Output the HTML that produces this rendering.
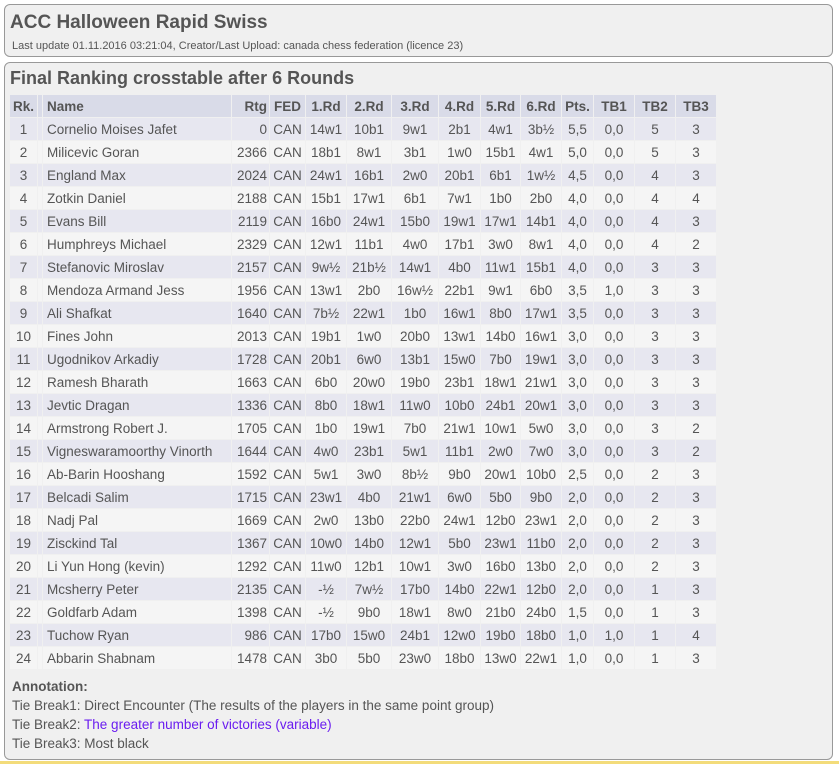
<!DOCTYPE html>
<html><head><meta charset="utf-8"><style>
body{margin:0;background:#fff;font-family:"Liberation Sans",sans-serif;color:#555;width:839px;height:764px;position:relative;overflow:hidden}
.b1{position:absolute;left:4px;top:4px;width:827px;height:51px;border:1px solid #999;border-radius:6px;background:#f0f0f0}
.b2{position:absolute;left:4px;top:62px;width:827px;height:696px;border:1px solid #999;border-radius:6px;background:#f0f0f0}
h1{position:absolute;left:5px;top:7px;margin:0;font-size:19px;font-weight:bold;color:#555}
.sub{position:absolute;left:7px;top:35px;font-size:11px}
h2{position:absolute;left:5px;top:5px;margin:0;font-size:18px;font-weight:bold;color:#555}
table{position:absolute;left:4px;top:31px;border-collapse:collapse;table-layout:fixed;font-size:13.5px}
td,th{height:22px;padding:0 2px;border:1px solid #f0f0f0;white-space:nowrap;overflow:hidden;text-align:center}
th{background:#d9dbe8;font-weight:bold}
tr.o td{background:#e7e7f0}tr.e td{background:#f5f5f5}
td.n,th.n{text-align:left;padding-left:4px}td.r,th.r{text-align:right}
.ann{position:absolute;left:7px;top:614px;font-size:13.5px;line-height:19px}
.ann b{color:#555}
.yl{position:absolute;left:0;top:761px;width:839px;height:3px;background:#f3dc7a}
</style></head><body>
<div class="b1"><h1>ACC Halloween Rapid Swiss</h1><div class="sub">Last update 01.11.2016 03:21:04, Creator/Last Upload: canada chess federation (licence 23)</div></div>
<div class="b2"><h2>Final Ranking crosstable after 6 Rounds</h2>
<table>
<colgroup><col style="width:28px"><col style="width:5px"><col style="width:189px"><col style="width:38px"><col style="width:36px"><col style="width:41px"><col style="width:45px"><col style="width:47px"><col style="width:42px"><col style="width:40px"><col style="width:41px"><col style="width:32px"><col style="width:41px"><col style="width:41px"><col style="width:41px"></colgroup>
<tr><th>Rk.</th><th></th><th class="n">Name</th><th class="r">Rtg</th><th>FED</th><th>1.Rd</th><th>2.Rd</th><th>3.Rd</th><th>4.Rd</th><th>5.Rd</th><th>6.Rd</th><th>Pts.</th><th>TB1</th><th>TB2</th><th>TB3</th></tr>
<tr class="o"><td>1</td><td></td><td class="n">Cornelio Moises Jafet</td><td class="r">0</td><td>CAN</td><td>14w1</td><td>10b1</td><td>9w1</td><td>2b1</td><td>4w1</td><td>3b½</td><td>5,5</td><td>0,0</td><td>5</td><td>3</td></tr>
<tr class="e"><td>2</td><td></td><td class="n">Milicevic Goran</td><td class="r">2366</td><td>CAN</td><td>18b1</td><td>8w1</td><td>3b1</td><td>1w0</td><td>15b1</td><td>4w1</td><td>5,0</td><td>0,0</td><td>5</td><td>3</td></tr>
<tr class="o"><td>3</td><td></td><td class="n">England Max</td><td class="r">2024</td><td>CAN</td><td>24w1</td><td>16b1</td><td>2w0</td><td>20b1</td><td>6b1</td><td>1w½</td><td>4,5</td><td>0,0</td><td>4</td><td>3</td></tr>
<tr class="e"><td>4</td><td></td><td class="n">Zotkin Daniel</td><td class="r">2188</td><td>CAN</td><td>15b1</td><td>17w1</td><td>6b1</td><td>7w1</td><td>1b0</td><td>2b0</td><td>4,0</td><td>0,0</td><td>4</td><td>4</td></tr>
<tr class="o"><td>5</td><td></td><td class="n">Evans Bill</td><td class="r">2119</td><td>CAN</td><td>16b0</td><td>24w1</td><td>15b0</td><td>19w1</td><td>17w1</td><td>14b1</td><td>4,0</td><td>0,0</td><td>4</td><td>3</td></tr>
<tr class="e"><td>6</td><td></td><td class="n">Humphreys Michael</td><td class="r">2329</td><td>CAN</td><td>12w1</td><td>11b1</td><td>4w0</td><td>17b1</td><td>3w0</td><td>8w1</td><td>4,0</td><td>0,0</td><td>4</td><td>2</td></tr>
<tr class="o"><td>7</td><td></td><td class="n">Stefanovic Miroslav</td><td class="r">2157</td><td>CAN</td><td>9w½</td><td>21b½</td><td>14w1</td><td>4b0</td><td>11w1</td><td>15b1</td><td>4,0</td><td>0,0</td><td>3</td><td>3</td></tr>
<tr class="e"><td>8</td><td></td><td class="n">Mendoza Armand Jess</td><td class="r">1956</td><td>CAN</td><td>13w1</td><td>2b0</td><td>16w½</td><td>22b1</td><td>9w1</td><td>6b0</td><td>3,5</td><td>1,0</td><td>3</td><td>3</td></tr>
<tr class="o"><td>9</td><td></td><td class="n">Ali Shafkat</td><td class="r">1640</td><td>CAN</td><td>7b½</td><td>22w1</td><td>1b0</td><td>16w1</td><td>8b0</td><td>17w1</td><td>3,5</td><td>0,0</td><td>3</td><td>3</td></tr>
<tr class="e"><td>10</td><td></td><td class="n">Fines John</td><td class="r">2013</td><td>CAN</td><td>19b1</td><td>1w0</td><td>20b0</td><td>13w1</td><td>14b0</td><td>16w1</td><td>3,0</td><td>0,0</td><td>3</td><td>3</td></tr>
<tr class="o"><td>11</td><td></td><td class="n">Ugodnikov Arkadiy</td><td class="r">1728</td><td>CAN</td><td>20b1</td><td>6w0</td><td>13b1</td><td>15w0</td><td>7b0</td><td>19w1</td><td>3,0</td><td>0,0</td><td>3</td><td>3</td></tr>
<tr class="e"><td>12</td><td></td><td class="n">Ramesh Bharath</td><td class="r">1663</td><td>CAN</td><td>6b0</td><td>20w0</td><td>19b0</td><td>23b1</td><td>18w1</td><td>21w1</td><td>3,0</td><td>0,0</td><td>3</td><td>3</td></tr>
<tr class="o"><td>13</td><td></td><td class="n">Jevtic Dragan</td><td class="r">1336</td><td>CAN</td><td>8b0</td><td>18w1</td><td>11w0</td><td>10b0</td><td>24b1</td><td>20w1</td><td>3,0</td><td>0,0</td><td>3</td><td>3</td></tr>
<tr class="e"><td>14</td><td></td><td class="n">Armstrong Robert J.</td><td class="r">1705</td><td>CAN</td><td>1b0</td><td>19w1</td><td>7b0</td><td>21w1</td><td>10w1</td><td>5w0</td><td>3,0</td><td>0,0</td><td>3</td><td>2</td></tr>
<tr class="o"><td>15</td><td></td><td class="n">Vigneswaramoorthy Vinorth</td><td class="r">1644</td><td>CAN</td><td>4w0</td><td>23b1</td><td>5w1</td><td>11b1</td><td>2w0</td><td>7w0</td><td>3,0</td><td>0,0</td><td>3</td><td>2</td></tr>
<tr class="e"><td>16</td><td></td><td class="n">Ab-Barin Hooshang</td><td class="r">1592</td><td>CAN</td><td>5w1</td><td>3w0</td><td>8b½</td><td>9b0</td><td>20w1</td><td>10b0</td><td>2,5</td><td>0,0</td><td>2</td><td>3</td></tr>
<tr class="o"><td>17</td><td></td><td class="n">Belcadi Salim</td><td class="r">1715</td><td>CAN</td><td>23w1</td><td>4b0</td><td>21w1</td><td>6w0</td><td>5b0</td><td>9b0</td><td>2,0</td><td>0,0</td><td>2</td><td>3</td></tr>
<tr class="e"><td>18</td><td></td><td class="n">Nadj Pal</td><td class="r">1669</td><td>CAN</td><td>2w0</td><td>13b0</td><td>22b0</td><td>24w1</td><td>12b0</td><td>23w1</td><td>2,0</td><td>0,0</td><td>2</td><td>3</td></tr>
<tr class="o"><td>19</td><td></td><td class="n">Zisckind Tal</td><td class="r">1367</td><td>CAN</td><td>10w0</td><td>14b0</td><td>12w1</td><td>5b0</td><td>23w1</td><td>11b0</td><td>2,0</td><td>0,0</td><td>2</td><td>3</td></tr>
<tr class="e"><td>20</td><td></td><td class="n">Li Yun Hong (kevin)</td><td class="r">1292</td><td>CAN</td><td>11w0</td><td>12b1</td><td>10w1</td><td>3w0</td><td>16b0</td><td>13b0</td><td>2,0</td><td>0,0</td><td>2</td><td>3</td></tr>
<tr class="o"><td>21</td><td></td><td class="n">Mcsherry Peter</td><td class="r">2135</td><td>CAN</td><td>-½</td><td>7w½</td><td>17b0</td><td>14b0</td><td>22w1</td><td>12b0</td><td>2,0</td><td>0,0</td><td>1</td><td>3</td></tr>
<tr class="e"><td>22</td><td></td><td class="n">Goldfarb Adam</td><td class="r">1398</td><td>CAN</td><td>-½</td><td>9b0</td><td>18w1</td><td>8w0</td><td>21b0</td><td>24b0</td><td>1,5</td><td>0,0</td><td>1</td><td>3</td></tr>
<tr class="o"><td>23</td><td></td><td class="n">Tuchow Ryan</td><td class="r">986</td><td>CAN</td><td>17b0</td><td>15w0</td><td>24b1</td><td>12w0</td><td>19b0</td><td>18b0</td><td>1,0</td><td>1,0</td><td>1</td><td>4</td></tr>
<tr class="e"><td>24</td><td></td><td class="n">Abbarin Shabnam</td><td class="r">1478</td><td>CAN</td><td>3b0</td><td>5b0</td><td>23w0</td><td>18b0</td><td>13w0</td><td>22w1</td><td>1,0</td><td>0,0</td><td>1</td><td>3</td></tr>
</table>
<div class="ann"><b>Annotation:</b><br>Tie Break1: Direct Encounter (The results of the players in the same point group)<br>Tie Break2: <span style="color:#6a1cf0">The greater number of victories (variable)</span><br>Tie Break3: Most black</div>
</div>
<div class="yl"></div>
</body></html>
